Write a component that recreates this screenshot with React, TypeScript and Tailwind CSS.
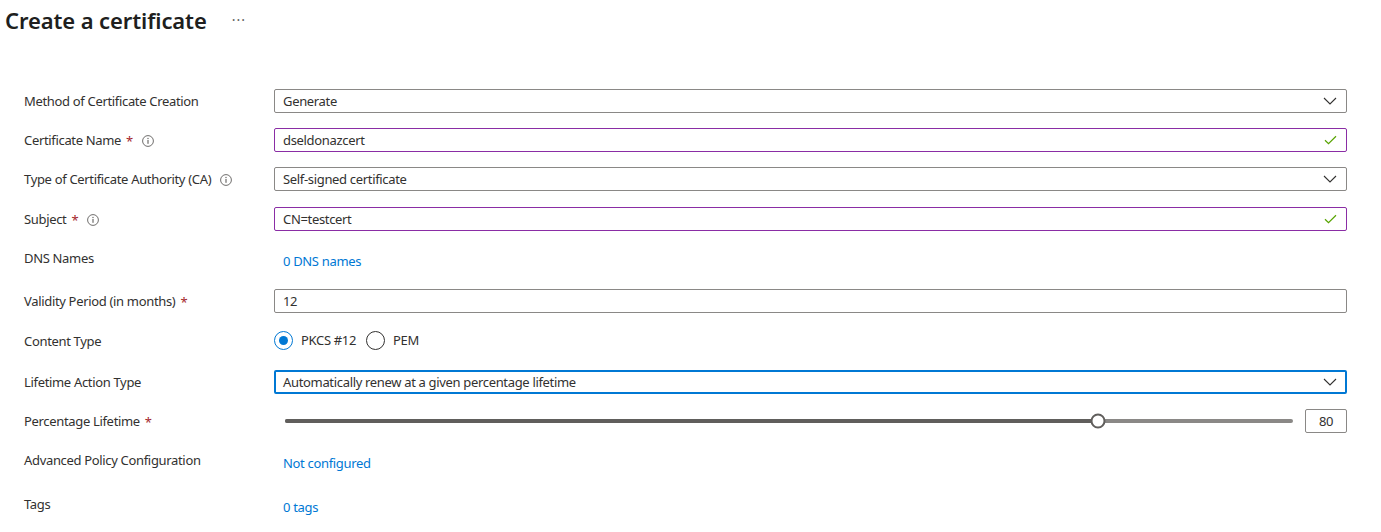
import React from "react";

const FONT = { fontFamily: '"Segoe UI", "Noto Sans", "Open Sans", sans-serif' };

function InfoIcon() {
  return (
    <svg width="12" height="12" viewBox="0 0 12 12" className="ml-[9px] shrink-0 translate-y-[1px]">
      <circle cx="6" cy="6" r="5.4" fill="none" stroke="#605e5c" strokeWidth="0.9" />
      <rect x="5.45" y="5" width="1.1" height="3.8" fill="#605e5c" />
      <circle cx="6" cy="3.5" r="0.65" fill="#605e5c" />
    </svg>
  );
}

function Chevron() {
  return (
    <svg width="14" height="8" viewBox="0 0 14 8" className="shrink-0">
      <path d="M1 1 L7 7 L13 1" fill="none" stroke="#323130" strokeWidth="1.1" />
    </svg>
  );
}

function Check() {
  return (
    <svg width="13" height="10" viewBox="0 0 13 10" className="shrink-0">
      <path d="M1 5.2 L4.5 8.6 L12 1.2" fill="none" stroke="#57a300" strokeWidth="1.2" />
    </svg>
  );
}

function Req() {
  return <span className="ml-[5px] translate-y-[2px] text-[#a4262c]">*</span>;
}

function Label({ text, required, info, className = "" }: { text: string; required?: boolean; info?: boolean; className?: string }) {
  return (
    <div className={"flex w-[250px] shrink-0 items-center " + className}>
      <span className="translate-y-[1px]">{text}</span>
      {required && <Req />}
      {info && <InfoIcon />}
    </div>
  );
}

function Dropdown({ value, focused }: { value: string; focused?: boolean }) {
  return (
    <div
      className={
        "flex h-[24px] flex-1 items-center justify-between rounded-[2px] " +
        (focused ? "border-2 border-[#0078d4] pl-[7px] pr-[8px]" : "border border-[#8a8886] pl-[8px] pr-[9px]")
      }
    >
      <span className="translate-y-[1px]">{value}</span>
      <Chevron />
    </div>
  );
}

function TextBox({ value, valid }: { value: string; valid?: boolean }) {
  return (
    <div
      className={
        "flex h-[24px] flex-1 items-center justify-between rounded-[2px] border pl-[8px] pr-[9px] " +
        (valid ? "border-[#8a2da5]" : "border-[#8a8886]")
      }
    >
      <span className="translate-y-[1px]">{value}</span>
      {valid && <Check />}
    </div>
  );
}

function Radio({ checked, label }: { checked?: boolean; label: string }) {
  return (
    <div className="flex items-center">
      <span
        className={
          "flex h-[19px] w-[19px] items-center justify-center rounded-full border " +
          (checked ? "border-[#0078d4]" : "border-[#323130]")
        }
      >
        {checked && <span className="h-[9px] w-[9px] rounded-full bg-[#0078d4]" />}
      </span>
      <span className="ml-[8px] translate-y-[1px]">{label}</span>
    </div>
  );
}

function Slider({ value, min, max }: { value: number; min: number; max: number }) {
  const pct = ((value - min) / (max - min)) * 100;
  return (
    <div className="flex flex-1 items-center">
      <div className="relative ml-[11px] mr-[12px] h-[4px] flex-1 rounded-full bg-[#8a8886]">
        <div className="absolute left-0 top-0 h-[4px] rounded-full bg-[#605e5c]" style={{ width: `${pct}%` }} />
        <div
          className="absolute top-1/2 h-[15px] w-[15px] -translate-x-1/2 -translate-y-1/2 rounded-full border-2 border-[#605e5c] bg-white"
          style={{ left: `${pct}%` }}
        />
      </div>
      <div className="flex h-[24px] w-[42px] items-center justify-center rounded-[2px] border border-[#8a8886]">
        <span className="translate-y-[1px]">{value}</span>
      </div>
    </div>
  );
}

function Link({ text }: { text: string }) {
  return <span className="pl-[9px] text-[#0078d4]">{text}</span>;
}

export default function App() {
  return (
    <div
      className="h-[532px] w-[1381px] overflow-hidden bg-white text-[13px] tracking-[-0.33px] text-[#323130]"
      style={FONT}
    >
      <div className="flex h-[40px] items-center pl-[5px]">
        <h1 className="text-[22px] font-semibold leading-none tracking-[-0.1px] text-[#201f1e]">Create a certificate</h1>
        <span className="ml-[25px] mt-[-2px] text-[14px] tracking-[1px] text-[#605e5c]">···</span>
      </div>

      <div className="pl-[24px] pr-[34px] pt-[42px]">
        <div className="flex h-[38px] items-center">
          <Label text="Method of Certificate Creation" />
          <Dropdown value="Generate" />
        </div>
        <div className="flex h-[40px] items-center">
          <Label text="Certificate Name" required info />
          <TextBox value="dseldonazcert" valid />
        </div>
        <div className="flex h-[38px] items-center">
          <Label text="Type of Certificate Authority (CA)" info />
          <Dropdown value="Self-signed certificate" />
        </div>
        <div className="flex h-[41px] items-center">
          <Label text="Subject" required info />
          <TextBox value="CN=testcert" valid />
        </div>
        <div className="flex h-[41px] items-center">
          <Label text="DNS Names" className="mt-[-3px]" />
          <div className="mt-[3px] translate-y-[1px]">
            <Link text="0 DNS names" />
          </div>
        </div>
        <div className="flex h-[42px] items-center">
          <Label text="Validity Period (in months)" required />
          <TextBox value="12" />
        </div>
        <div className="flex h-[36px] items-center">
          <Label text="Content Type" className="mt-[2px]" />
          <div className="flex items-center gap-[10px]">
            <Radio checked label="PKCS #12" />
            <Radio label="PEM" />
          </div>
        </div>
        <div className="flex h-[48px] items-center">
          <Label text="Lifetime Action Type" />
          <Dropdown value="Automatically renew at a given percentage lifetime" focused />
        </div>
        <div className="flex h-[30px] items-center">
          <Label text="Percentage Lifetime" required />
          <Slider value={80} min={1} max={99} />
        </div>
        <div className="flex h-[51px] items-center">
          <Label text="Advanced Policy Configuration" className="mt-[-3px]" />
          <div className="mt-[3px] translate-y-[1px]">
            <Link text="Not configured" />
          </div>
        </div>
        <div className="flex h-[37px] items-center">
          <Label text="Tags" className="mt-[-3px]" />
          <div className="mt-[3px] translate-y-[1px]">
            <Link text="0 tags" />
          </div>
        </div>
      </div>
    </div>
  );
}
